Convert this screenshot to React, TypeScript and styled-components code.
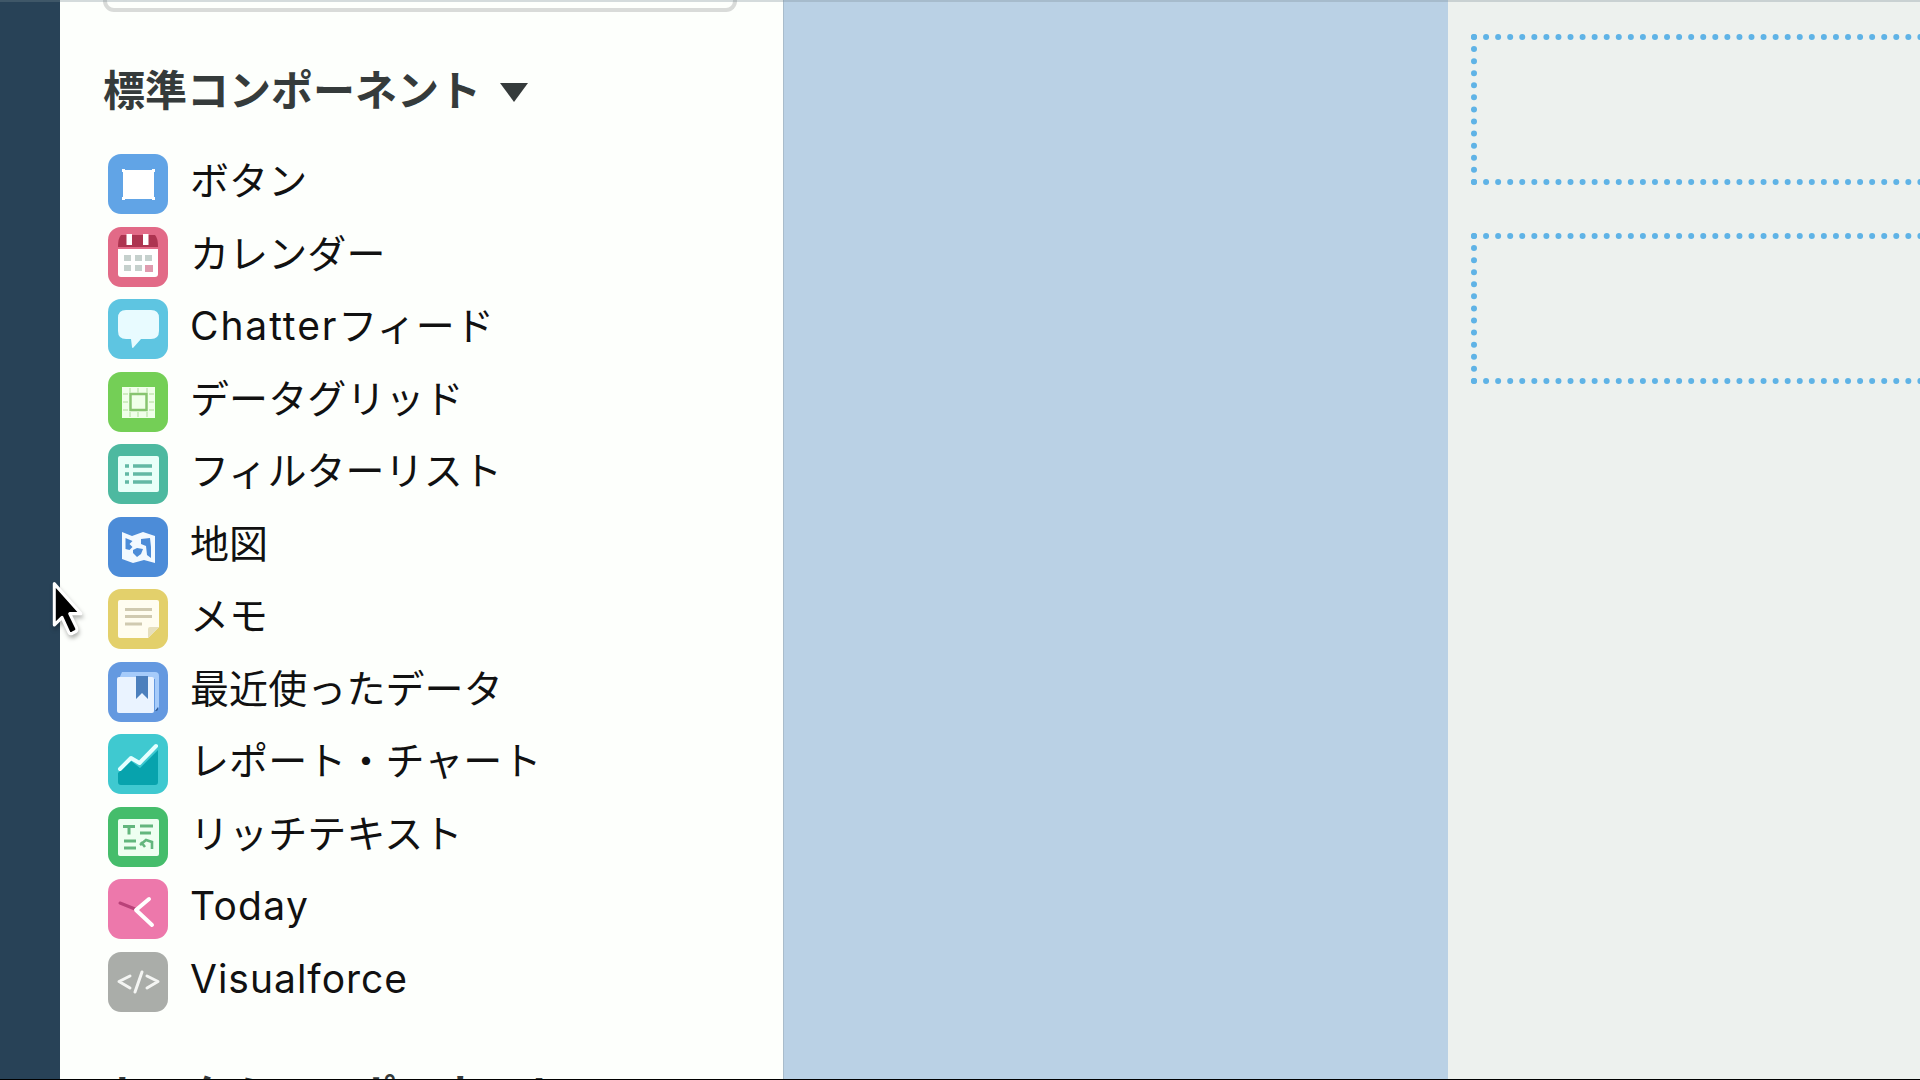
import React from "react";
import styled, { createGlobalStyle } from "styled-components";

const Global = createGlobalStyle`
  * { box-sizing: border-box; }
  html, body { margin: 0; padding: 0; overflow: hidden; }
`;

const Screen = styled.div`
  position: relative;
  display: flex;
  width: 1920px;
  height: 1080px;
  overflow: hidden;
  background: #edf1ee;
  border-bottom: 1px solid #000;
  font-family: Inter, "Noto Sans CJK JP", sans-serif;
  color: #111;
`;

const Rail = styled.div`
  flex: none;
  width: 60px;
  background: #284257;
`;

const Panel = styled.aside`
  flex: none;
  width: 723px;
  padding: 0 46px 0 43px;
  background: #fdfffc;
  overflow: hidden;
`;

const SearchBox = styled.div`
  height: 12px;
  border: 4px solid #d9dbd9;
  border-top: 0;
  border-radius: 0 0 11px 11px;
`;

const Heading = styled.h2<{ $gap: number }>`
  display: flex;
  align-items: center;
  height: 60px;
  margin: ${(p) => p.$gap}px 0 0;
  font-family: "Noto Sans CJK JP", sans-serif;
  font-size: 42px;
  line-height: 60px;
  font-weight: 700;
  color: #353b3b;
  white-space: nowrap;
`;

const Caret = styled.span`
  margin: 8px 0 0 19px;
  border: 14px solid transparent;
  border-top: 19px solid #353b3b;
  border-bottom: 0;
`;

const List = styled.ul`
  margin: 36px 0 0;
  padding: 0 0 0 5px;
  list-style: none;
`;

const Row = styled.li`
  display: flex;
  gap: 22px;
  height: 72.5px;
`;

const Tile = styled.svg<{ $color: string }>`
  flex: none;
  width: 60px;
  height: 60px;
  border-radius: 13px;
  background: ${(p) => p.$color};
`;

const Label = styled.span`
  height: 53px;
  line-height: 53px;
  font-size: 39px;
  letter-spacing: 0.1px;
  white-space: nowrap;
`;

const Latin = styled.span<{ $tracking: number }>`
  letter-spacing: ${(p) => p.$tracking}px;
  font-variant-ligatures: none;
`;

const Canvas = styled.div`
  flex: none;
  width: 665px;
  background: #bad1e5;
  border-left: 1px solid #a9bccb;
`;

const Page = styled.main`
  flex: 1;
  min-width: 0;
  display: flex;
  flex-direction: column;
  gap: 48px;
  padding: 34px 0 0 23px;
  background: #edf1ee;
`;

const DropZone = styled.div`
  flex: none;
  width: 489px;
  height: 151px;
  border: 6px dotted #5fb3e6;
`;

const TopEdge = styled.div`
  position: absolute;
  left: 0;
  top: 0;
  width: 1920px;
  height: 2px;
  background: rgba(120, 135, 145, 0.3);
`;

const Pointer = styled.svg`
  position: absolute;
  left: 50px;
  top: 580px;
  width: 36px;
  height: 58px;
  filter: drop-shadow(1px 3px 2px rgba(0, 0, 0, 0.3));
`;

const items: { label: React.ReactNode; color: string; art: React.ReactNode }[] = [
  {
    label: "ボタン",
    color: "#61a4e6",
    art: (
      <path d="M14 15h3v1h27v-1h3v3h-1v25h1v3h-3v-1H17v1h-3v-3h1V18h-1z" fill="#fff" />
    ),
  },
  {
    label: "カレンダー",
    color: "#e26a87",
    art: (
      <>
        <path d="M13 8h34q3 3 3 12H10q0-9 3-12z" fill="#ad3450" />
        <path d="M18.500 7h5.500v11h-5.500zM35 7h5.500v11H35z" fill="#fff" />
        <path d="M10 22h40v25q0 3-3 3H13q-3 0-3-3z" fill="#fff" />
        <path d="M16 28h7v6h-7zM27 28h7v6h-7zM37 28h7v6h-7zM16 38h7v6h-7zM27 38h7v6h-7z" fill="#c5d0cd" />
        <path d="M37 38h8v7h-8z" fill="#e09aae" />
      </>
    ),
  },
  {
    label: (
      <>
        <Latin $tracking={1.9}>Chatter</Latin>フィード
      </>
    ),
    color: "#5ec5e1",
    art: (
      <path d="M18 11h25q8 0 8 8v13q0 8-8 8H33l-8 9q-1 0-1-1l-1-8h-5q-8 0-8-8V19q0-8 8-8z" fill="#e8fbff" />
    ),
  },
  {
    label: "データグリッド",
    color: "#74cf56",
    art: (
      <>
        <path d="M14 15h33v31H14z" fill="#f0ffe9" />
        <path d="M22.500 22h16v16h-16z" fill="none" stroke="#87c46f" strokeWidth="2.500" />
        <path d="M22 16v5M30 16v5M39 16v5M22 40v5M30 40v5M39 40v5M15 22h5M15 30h5M15 38h5M41 22h5M41 30h5M41 38h5" stroke="#c3e8b3" strokeWidth="1.500" />
      </>
    ),
  },
  {
    label: "フィルターリスト",
    color: "#4db9a0",
    art: (
      <>
        <rect x="10" y="12" width="41" height="36" rx="2" fill="#e8fff8" />
        <path d="M17 22h4M25 22h19M17 30h4M25 30h19M17 38h4M25 38h19" stroke="#62b8a4" strokeWidth="3.500" />
      </>
    ),
  },
  {
    label: "地図",
    color: "#4c8cd8",
    art: (
      <>
        <path d="M14 15l10 4 11-4 12 4v27l-11-3-11 3-11-4z" fill="#f2f9ff" />
        <path d="M17.500 21l7 3-3 3 3 3-3 3-4-1zM25 33l4-2 6 1-2 5-4 3-4-4zM33 22l9-1 1 9v11l-4-3-1-9-5-2z" fill="#4c8cd8" />
      </>
    ),
  },
  {
    label: "メモ",
    color: "#e3d06b",
    art: (
      <>
        <path d="M12 11h37q2 0 2 2v25L40 49H12q-2 0-2-2V13q0-2 2-2z" fill="#fffdf0" />
        <path d="M51 38L40 49v-9q0-2 2-2z" fill="#e6dfbd" />
        <path d="M17 20.500h27M17 27.500h27M17 35h17" stroke="#d0cab0" strokeWidth="3.200" />
      </>
    ),
  },
  {
    label: "最近使ったデータ",
    color: "#6499e0",
    art: (
      <>
        <path d="M14 10h33q4 0 4 4v31l-4 4V17H11z" fill="#a6cbfa" />
        <path d="M47 49l3-4v2q0 2-3 2z" fill="#315e9b" />
        <rect x="9" y="15" width="37" height="36" rx="2" fill="#eaf3ff" />
        <path d="M28 14h12v23l-6-6-6 6z" fill="#4c7fbd" />
      </>
    ),
  },
  {
    label: "レポート・チャート",
    color: "#3fc9d0",
    art: (
      <>
        <path d="M10 39l13-12 9 7 18-18v32q0 3-3 3H13q-3 0-3-3z" fill="#07a3ad" />
        <path d="M12 35l11-11 8.500 5L48 12" fill="none" stroke="#e4ffff" strokeWidth="4" strokeLinecap="round" strokeLinejoin="round" />
      </>
    ),
  },
  {
    label: "リッチテキスト",
    color: "#45bd6b",
    art: (
      <>
        <rect x="10" y="12" width="41" height="37" rx="2" fill="#eefff1" />
        <path d="M15 19.500h12M21 19.500v8M32 19h13M32 26h11M16 34h12M16 41h12" stroke="#63b67d" strokeWidth="3" />
        <path d="M32 38l6-5 6 2v7M33 35l4 5" fill="none" stroke="#63b67d" strokeWidth="2.600" />
      </>
    ),
  },
  {
    label: <Latin $tracking={1.3}>Today</Latin>,
    color: "#ed78ab",
    art: (
      <>
        <path d="M12 24l15 6" stroke="#b94279" strokeWidth="3" strokeLinecap="round" />
        <path d="M41 20L28 31l16 15" fill="none" stroke="#fff" strokeWidth="4" strokeLinecap="round" strokeLinejoin="round" />
      </>
    ),
  },
  {
    label: <Latin $tracking={1}>Visualforce</Latin>,
    color: "#aaada9",
    art: (
      <path d="M22 24l-11 5.500L22 36M34 20l-7 20M39 24l11 5.500L39 36" fill="none" stroke="#f4f5f3" strokeWidth="3" strokeLinecap="round" strokeLinejoin="round" />
    ),
  },
];

export default function App() {
  return (
    <>
      <Global />
      <Screen>
        <Rail />
        <Panel>
          <SearchBox />
          <Heading $gap={46}>
            標準コンポーネント
            <Caret />
          </Heading>
          <List>
            {items.map((item) => (
              <Row key={item.color}>
                <Tile $color={item.color} viewBox="0 0 60 60">
                  {item.art}
                </Tile>
                <Label>{item.label}</Label>
              </Row>
            ))}
          </List>
          <Heading $gap={39}>カスタムコンポーネント</Heading>
        </Panel>
        <Canvas />
        <Page>
          <DropZone />
          <DropZone />
        </Page>
        <TopEdge />
        <Pointer viewBox="0 0 42 62" preserveAspectRatio="none">
          <path
            d="M5 4v44l9-8 8 16q1 2 4 1l4-2q2-1 1-4l-8-15h13z"
            fill="#000"
            stroke="#fff"
            strokeWidth="3.500"
            strokeLinejoin="round"
          />
        </Pointer>
      </Screen>
    </>
  );
}
